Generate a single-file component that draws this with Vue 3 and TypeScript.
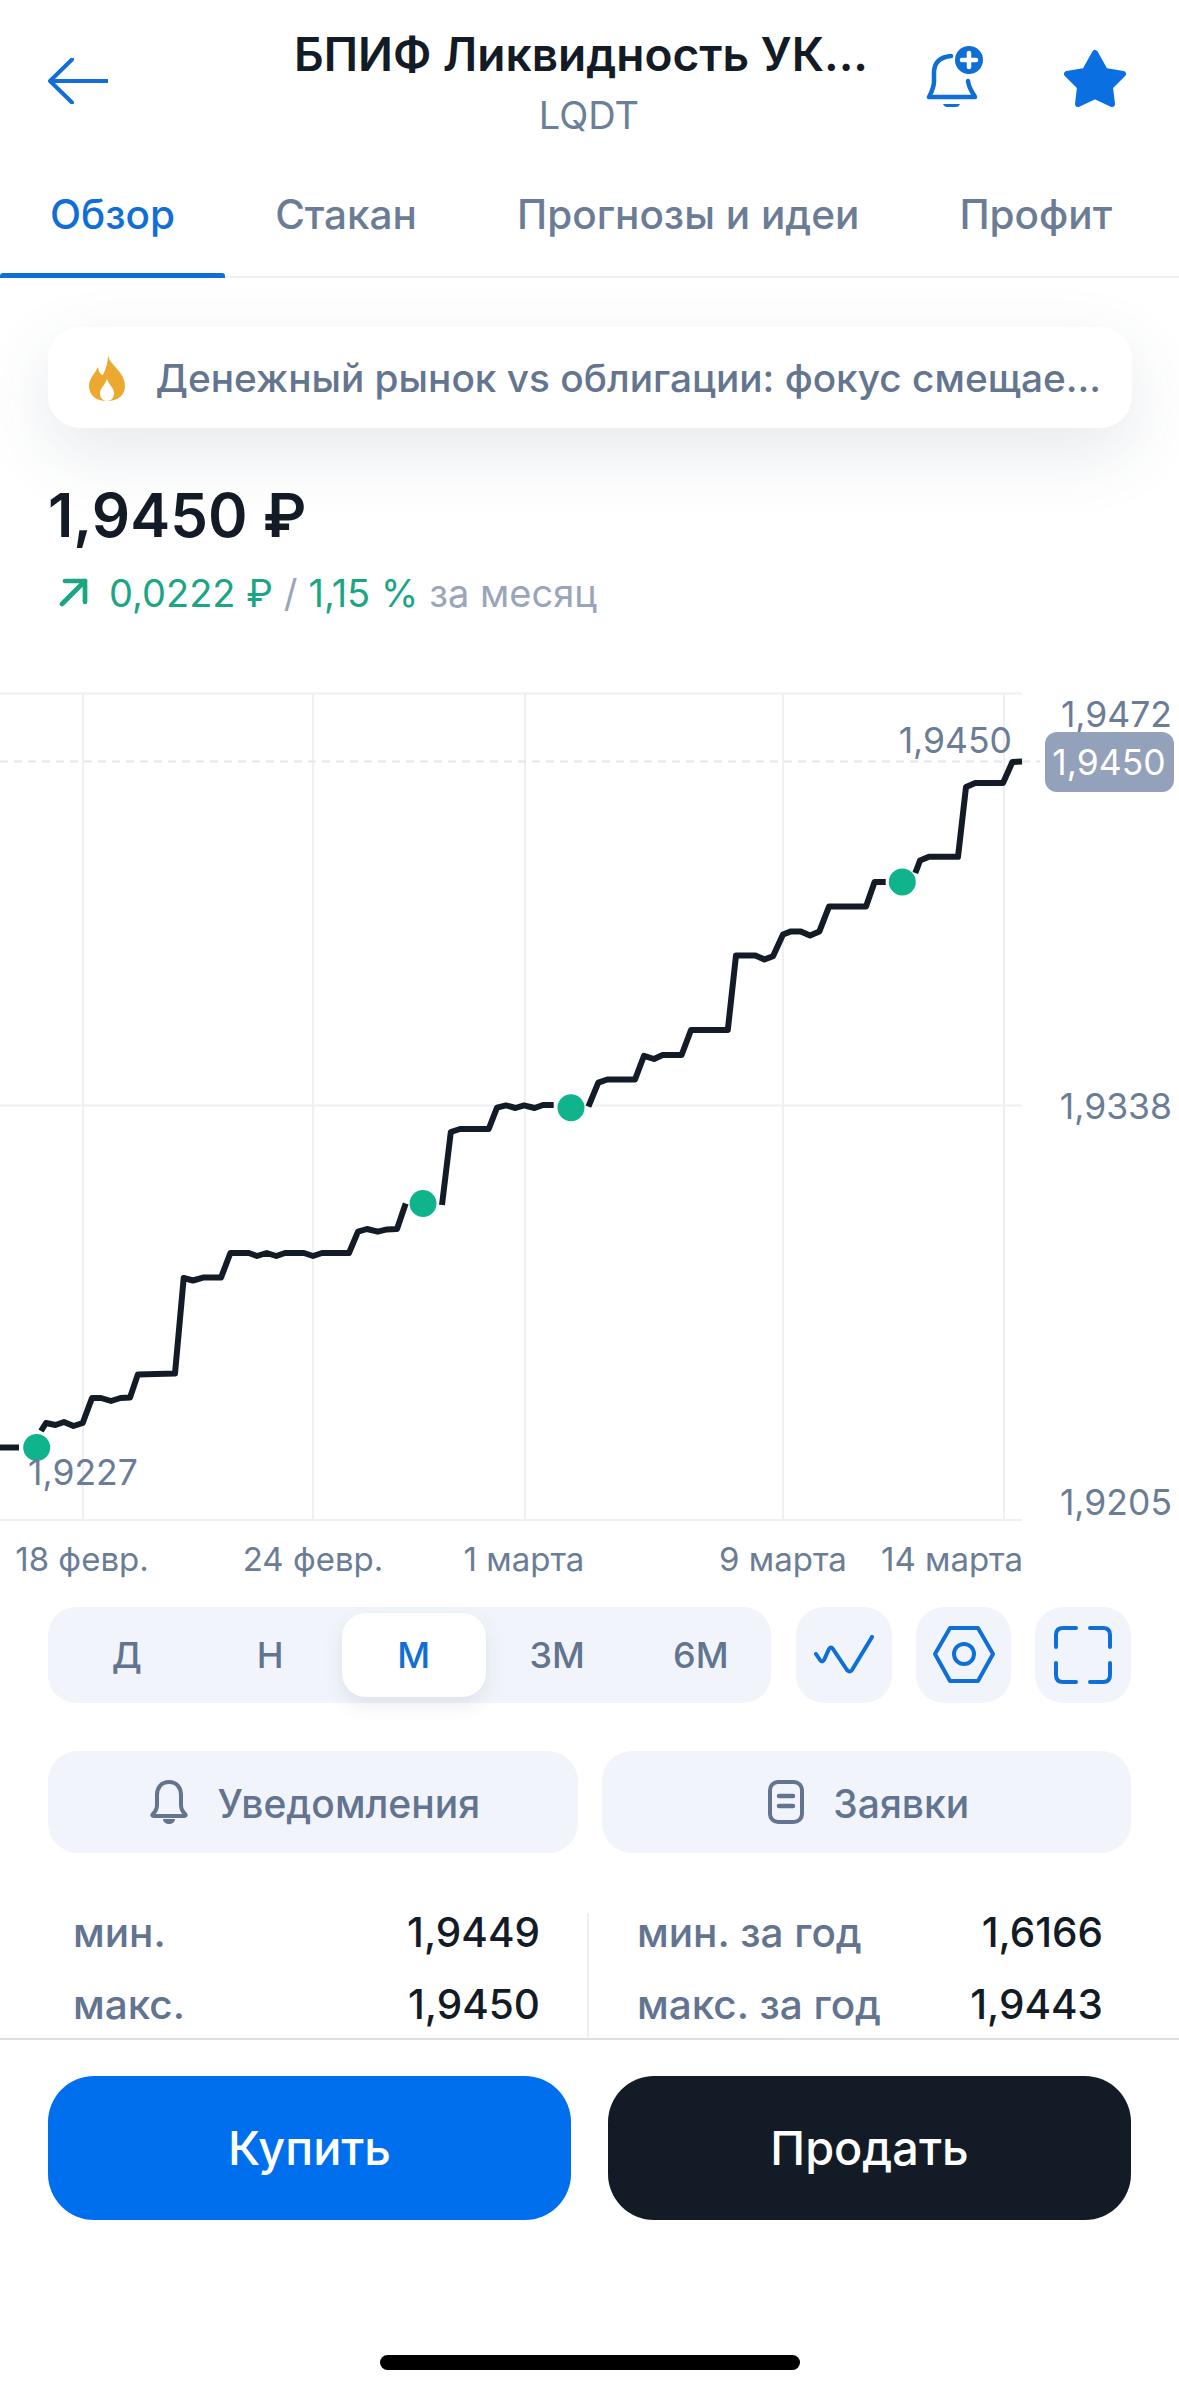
<template>
  <div class="page">
    <header class="top">
      <svg class="back" width="60" height="46" viewBox="0 0 60 46">
        <path d="M59 23H3M24 1.500L2 23l22 21.500" fill="none" stroke="#0f6fd6" stroke-width="4" stroke-linecap="round" stroke-linejoin="round" />
      </svg>
      <div class="title-block">
        <div class="title">БПИФ Ликвидность УК...</div>
        <div class="ticker">LQDT</div>
      </div>
      <svg class="bell-add" width="58" height="62" viewBox="0 0 58 62">
        <path d="M25 10C13 11 8 17 8 27v8C8 42 5 47 3 51H49C47 47 43 43 42 35" fill="none" stroke="#0f6fd6" stroke-width="4.500" stroke-linecap="round" stroke-linejoin="round" />
        <path d="M17 58h17c-1 2-2 3-4 3h-9c-2 0-3-1-4-3z" fill="#0f6fd6" />
        <circle cx="43" cy="14" r="14" fill="#0f6fd6" />
        <path d="M43 7v14M36 14h14" stroke="#fff" stroke-width="4.500" stroke-linecap="round" />
      </svg>
      <svg class="star" width="62" height="60" viewBox="0 0 62 60">
        <polygon points="31,4 41,22 59,25 46,38 48,55 31,47 14,55 16,38 3,25 21,22" fill="#0a6fe0" stroke="#0a6fe0" stroke-width="6" stroke-linejoin="round" />
      </svg>
    </header>

    <nav class="tabs">
      <span v-for="(tab, i) in tabs" :key="tab" class="tab" :class="{ active: i === 0 }">{{ tab }}</span>
    </nav>

    <div class="banner">
      <svg width="36" height="46" viewBox="0 0 36 46">
        <path d="M19 0C20 10 36 16 36 31 36 40 29 46 18 46 7 46 0 40 0 31 0 23 6 19 9 12 10 18 12 20 14 20 17 14 19 7 19 0Z" fill="#eda92f" />
        <path d="M18 46C13 46 11 42 11 38 11 33 16 30 18 24 20 30 25 33 25 38 25 42 23 46 18 46Z" fill="#fff" />
      </svg>
      <span class="banner-text">Денежный рынок vs облигации: фокус смещае...</span>
    </div>

    <div class="price">1,9450 ₽</div>
    <div class="change">
      <svg width="32" height="30" viewBox="0 0 32 30">
        <path d="M4 26L27 3M7 3h20v21" fill="none" stroke="#1aa583" stroke-width="4.700" stroke-linecap="round" stroke-linejoin="round" />
      </svg>
      <span class="up">0,0222 ₽</span>
      <span class="muted">/</span>
      <span class="up">1,15 %</span>
      <span class="muted">за месяц</span>
    </div>

    <svg class="chart" width="1179" height="910" viewBox="0 680 1179 910">
      <line x1="0" y1="693.500" x2="1022" y2="693.500" class="grid" />
      <line x1="0" y1="1105.500" x2="1022" y2="1105.500" class="grid" />
      <line x1="0" y1="1520" x2="1022" y2="1520" class="grid" />
      <line v-for="x in gridX" :key="x" :x1="x" y1="693" :x2="x" y2="1520" class="grid" />
      <line x1="0" y1="761.500" x2="1040" y2="761.500" class="dash" />
      <polyline v-for="(seg, i) in segments" :key="i" :points="seg" class="line" />
      <circle v-for="d in dots" :key="d[0]" :cx="d[0]" :cy="d[1]" r="13.500" fill="#10b48c" />
      <text x="1172" y="727" text-anchor="end" class="axis">1,9472</text>
      <text x="1172" y="1119" text-anchor="end" class="axis">1,9338</text>
      <text x="1172" y="1515" text-anchor="end" class="axis">1,9205</text>
      <text x="1012" y="753" text-anchor="end" class="axis">1,9450</text>
      <text x="28" y="1485" class="axis">1,9227</text>
      <rect x="1045" y="732" width="129" height="60" rx="12" fill="#94a1bb" />
      <text x="1109" y="775" text-anchor="middle" class="axis tag">1,9450</text>
      <text v-for="d in dates" :key="d.label" :x="d.x" y="1571" text-anchor="middle" class="date">{{ d.label }}</text>
    </svg>

    <div class="controls">
      <div class="periods">
        <span v-for="p in periods" :key="p" class="period" :class="{ active: p === 'М' }">{{ p }}</span>
      </div>
      <div class="icon-btn">
        <svg width="60" height="40" viewBox="0 0 60 40">
          <path d="M2 19L6 25Q8 28 10 25L15 14Q17 11 19 14L33 35Q36 38 38 35L58 2" fill="none" stroke="#0f6fd6" stroke-width="4" stroke-linecap="round" stroke-linejoin="round" />
        </svg>
      </div>
      <div class="icon-btn">
        <svg width="64" height="58" viewBox="0 0 64 58">
          <path d="M3 28L18 2H46L61 28 46 55H18z" fill="none" stroke="#0f6fd6" stroke-width="4" stroke-linejoin="round" />
          <circle cx="32" cy="28" r="10" fill="none" stroke="#0f6fd6" stroke-width="4" />
        </svg>
      </div>
      <div class="icon-btn">
        <svg width="58" height="58" viewBox="0 0 58 58">
          <path d="M2 21V9Q2 2 9 2H22M36 2H49Q56 2 56 9V21M56 37V49Q56 56 49 56H36M22 56H9Q2 56 2 49V37" fill="none" stroke="#0f6fd6" stroke-width="4" stroke-linecap="round" />
        </svg>
      </div>
    </div>

    <div class="actions">
      <div class="action">
        <svg width="38" height="44" viewBox="0 0 38 44">
          <path d="M19 2C11 2 7 8 7 15v10c0 4-2 7-4 9-1 1-1 2 1 2h30c2 0 2-1 1-2-2-2-4-5-4-9V15C31 8 27 2 19 2z" fill="none" stroke="#62748f" stroke-width="4" />
          <path d="M13 39h12c0 3-3 5-6 5s-6-2-6-5z" fill="#62748f" />
        </svg>
        <span>Уведомления</span>
      </div>
      <div class="action">
        <svg width="36" height="44" viewBox="0 0 36 44">
          <rect x="2" y="2" width="32" height="40" rx="8" fill="none" stroke="#62748f" stroke-width="4" />
          <path d="M11 16h14M11 26h14" stroke="#62748f" stroke-width="4.500" stroke-linecap="round" />
        </svg>
        <span>Заявки</span>
      </div>
    </div>

    <div class="stats">
      <div class="stat-col left">
        <div v-for="s in statsLeft" :key="s[0]" class="stat"><span class="stat-label">{{ s[0] }}</span><span class="stat-value">{{ s[1] }}</span></div>
      </div>
      <div class="stat-col right">
        <div v-for="s in statsRight" :key="s[0]" class="stat"><span class="stat-label">{{ s[0] }}</span><span class="stat-value">{{ s[1] }}</span></div>
      </div>
    </div>

    <div class="trade">
      <div class="trade-btn buy">Купить</div>
      <div class="trade-btn sell">Продать</div>
    </div>

    <div class="home-bar"></div>
  </div>
</template>

<script setup lang="ts">
const tabs: string[] = ["Обзор", "Стакан", "Прогнозы и идеи", "Профит"];
const periods: string[] = ["Д", "Н", "М", "3М", "6М"];
const gridX: number[] = [83, 313, 525, 783, 1004];

const dates = [
  { label: "18 февр.", x: 82 },
  { label: "24 февр.", x: 313 },
  { label: "1 марта", x: 524 },
  { label: "9 марта", x: 783 },
  { label: "14 марта", x: 952 },
];

const statsLeft: [string, string][] = [
  ["мин.", "1,9449"],
  ["макс.", "1,9450"],
];
const statsRight: [string, string][] = [
  ["мин. за год", "1,6166"],
  ["макс. за год", "1,9443"],
];

const dots: [number, number][] = [
  [36.7, 1447.5],
  [423, 1203.5],
  [571, 1107.7],
  [902.3, 882],
];

// line is broken around each dot, same as the white halo in the app
const segments: string[] = [
  "0,1447.5 19,1447.5",
  "41,1431 46,1423 55.5,1425 64,1422 73.5,1426 82.7,1423 92,1398 101,1398 111,1401 120.5,1398 130,1397.6 137.8,1374.6 175,1373.5 183.7,1278 193,1280.5 203,1277.6 221,1277.6 230.4,1253 248.8,1253 257,1256 266.7,1253 276.3,1256 285,1253 304,1253 313,1256 322,1253 349,1253 358,1231.7 367,1229 377.7,1231.7 387,1229.4 397,1229 405.7,1203.5",
  "442,1205 450.8,1132 460,1129 488.7,1129 497,1107.7 506,1105.4 515.5,1108 524,1105.4 534.6,1108 543,1105 553.7,1105",
  "588.4,1106.7 598.3,1082.6 607.4,1079.5 635,1079.5 644,1055.8 654,1059 662.6,1055 681.6,1055 691,1030 727.8,1030 736,955.5 755.4,955.5 764.5,959.4 773,956.3 783,934.5 791,931.4 800.8,931.4 810,935.6 819.4,931.4 829,906.6 866,906.6 874.6,882 885.7,882",
  "915.3,873 920,860.6 929,856.8 958,856.8 966,787 975.3,783 1003,783 1012.4,762 1022,761.5",
];
</script>

<style scoped>
.page {
  width: 1179px;
  height: 2394px;
  background: #fff;
  font-family: Inter, "Noto Sans", sans-serif;
  position: relative;
  overflow: hidden;
}

.top {
  height: 172px;
  display: flex;
  align-items: flex-start;
  padding-left: 48px;
  box-sizing: border-box;
}
.back {
  margin-top: 58px;
  flex: none;
}
.title-block {
  width: 576px;
  margin-left: 185px;
  text-align: center;
  padding-top: 26px;
}
.title {
  font-size: 46px;
  font-weight: 600;
  line-height: 56px;
  color: #131b26;
  white-space: nowrap;
}
.ticker {
  font-size: 38px;
  line-height: 46px;
  margin-top: 10px;
  padding-left: 16px;
  color: #6b7f99;
}
.bell-add {
  margin: 46px 0 0 57px;
  flex: none;
}
.star {
  margin: 49px 0 0 80px;
  flex: none;
}

.tabs {
  height: 106px;
  display: flex;
  border-bottom: 2px solid #eef0f3;
  box-sizing: border-box;
}
.tab {
  padding: 18px 50px 0;
  font-size: 40.500px;
  font-weight: 500;
  line-height: 50px;
  color: #6b7d96;
  white-space: nowrap;
  position: relative;
}
.tab.active {
  color: #0f6fd6;
}
.tab.active::after {
  content: "";
  position: absolute;
  left: 0;
  right: 0;
  bottom: -2px;
  height: 5px;
  background: #0f6fd6;
  border-radius: 3px 3px 0 0;
}

.banner {
  margin: 49px 47px 0 48px;
  height: 101px;
  background: #fff;
  border-radius: 32px;
  box-shadow: 0 24px 70px rgba(50, 70, 100, 0.12);
  display: flex;
  align-items: center;
  padding-left: 41px;
  gap: 30.500px;
}
.banner-text {
  font-size: 38.800px;
  font-weight: 500;
  color: #64758f;
  white-space: nowrap;
}

.price {
  margin: 51px 0 0 48px;
  font-size: 60px;
  font-weight: 600;
  line-height: 72px;
  color: #131b26;
}
.change {
  margin: 20px 0 0 58px;
  display: flex;
  align-items: center;
  gap: 11px;
  font-size: 38px;
  line-height: 44px;
  white-space: nowrap;
}
.change svg {
  margin-right: 8px;
}
.up {
  color: #1aa583;
}
.muted {
  color: #9aa5bb;
}

.chart {
  display: block;
  position: absolute;
  top: 680px;
  left: 0;
}
.grid {
  stroke: #eef0f3;
  stroke-width: 2;
}
.dash {
  stroke: #e3e6ea;
  stroke-width: 2;
  stroke-dasharray: 8 6;
}
.line {
  fill: none;
  stroke: #131c26;
  stroke-width: 6;
  stroke-linejoin: round;
}
.axis {
  font-size: 35.500px;
  fill: #6b7d96;
}
.tag {
  fill: #fff;
}
.date {
  font-size: 33px;
  fill: #6b7d96;
}

.controls {
  position: absolute;
  top: 1607px;
  left: 48px;
  right: 48px;
  display: flex;
  gap: 24px;
  height: 96px;
}
.periods {
  width: 723px;
  height: 96px;
  background: #f1f5fb;
  border-radius: 28px;
  display: flex;
  padding: 6px 0 6px 7px;
  box-sizing: border-box;
  margin-right: 1px;
}
.period {
  flex: none;
  width: 143.500px;
  display: flex;
  align-items: center;
  justify-content: center;
  font-size: 36px;
  font-weight: 500;
  color: #62748f;
  border-radius: 24px;
}
.period.active {
  background: #fff;
  color: #0f6fd6;
  box-shadow: 0 8px 20px rgba(50, 70, 100, 0.1);
}
.icon-btn {
  width: 96px;
  background: #f1f5fb;
  border-radius: 28px;
  display: flex;
  align-items: center;
  justify-content: center;
}

.actions {
  position: absolute;
  top: 1751px;
  left: 48px;
  right: 48px;
  display: flex;
  gap: 24px;
}
.action {
  flex: 1;
  height: 102px;
  background: #f1f5fb;
  border-radius: 30px;
  display: flex;
  align-items: center;
  justify-content: center;
  gap: 29px;
  padding-left: 5px;
  font-size: 39px;
  font-weight: 500;
  color: #62748f;
}
.action span {
  margin-top: 2px;
}

.stats {
  position: absolute;
  top: 1897px;
  left: 0;
  right: 0;
  height: 143px;
  display: flex;
  border-bottom: 2px solid #dcdfe3;
  box-sizing: border-box;
}
.stats::before {
  content: "";
  position: absolute;
  left: 587px;
  top: 16px;
  bottom: 0;
  width: 2px;
  background: #eef0f3;
}
.stat-col {
  display: flex;
  flex-direction: column;
  gap: 24px;
  padding-top: 12px;
  box-sizing: border-box;
}
.stat-col.left {
  width: 587px;
  padding-left: 73px;
  padding-right: 47px;
}
.stat-col.right {
  width: 592px;
  padding-left: 50px;
  padding-right: 76px;
}
.stat {
  display: flex;
  justify-content: space-between;
  font-size: 40.500px;
  line-height: 48px;
  white-space: nowrap;
}
.stat-label {
  color: #62748f;
  font-weight: 500;
}
.stat-value {
  color: #131b26;
  font-weight: 500;
}

.trade {
  position: absolute;
  top: 2076px;
  left: 48px;
  right: 48px;
  display: flex;
  gap: 37px;
}
.trade-btn {
  flex: 1;
  height: 144px;
  border-radius: 46px;
  display: flex;
  align-items: center;
  justify-content: center;
  font-size: 46.800px;
  font-weight: 500;
  color: #fff;
}
.buy {
  background: #006fee;
}
.sell {
  background: #131c26;
}

.home-bar {
  position: absolute;
  left: 380px;
  top: 2355px;
  width: 420px;
  height: 15px;
  border-radius: 8px;
  background: #000;
}
</style>
